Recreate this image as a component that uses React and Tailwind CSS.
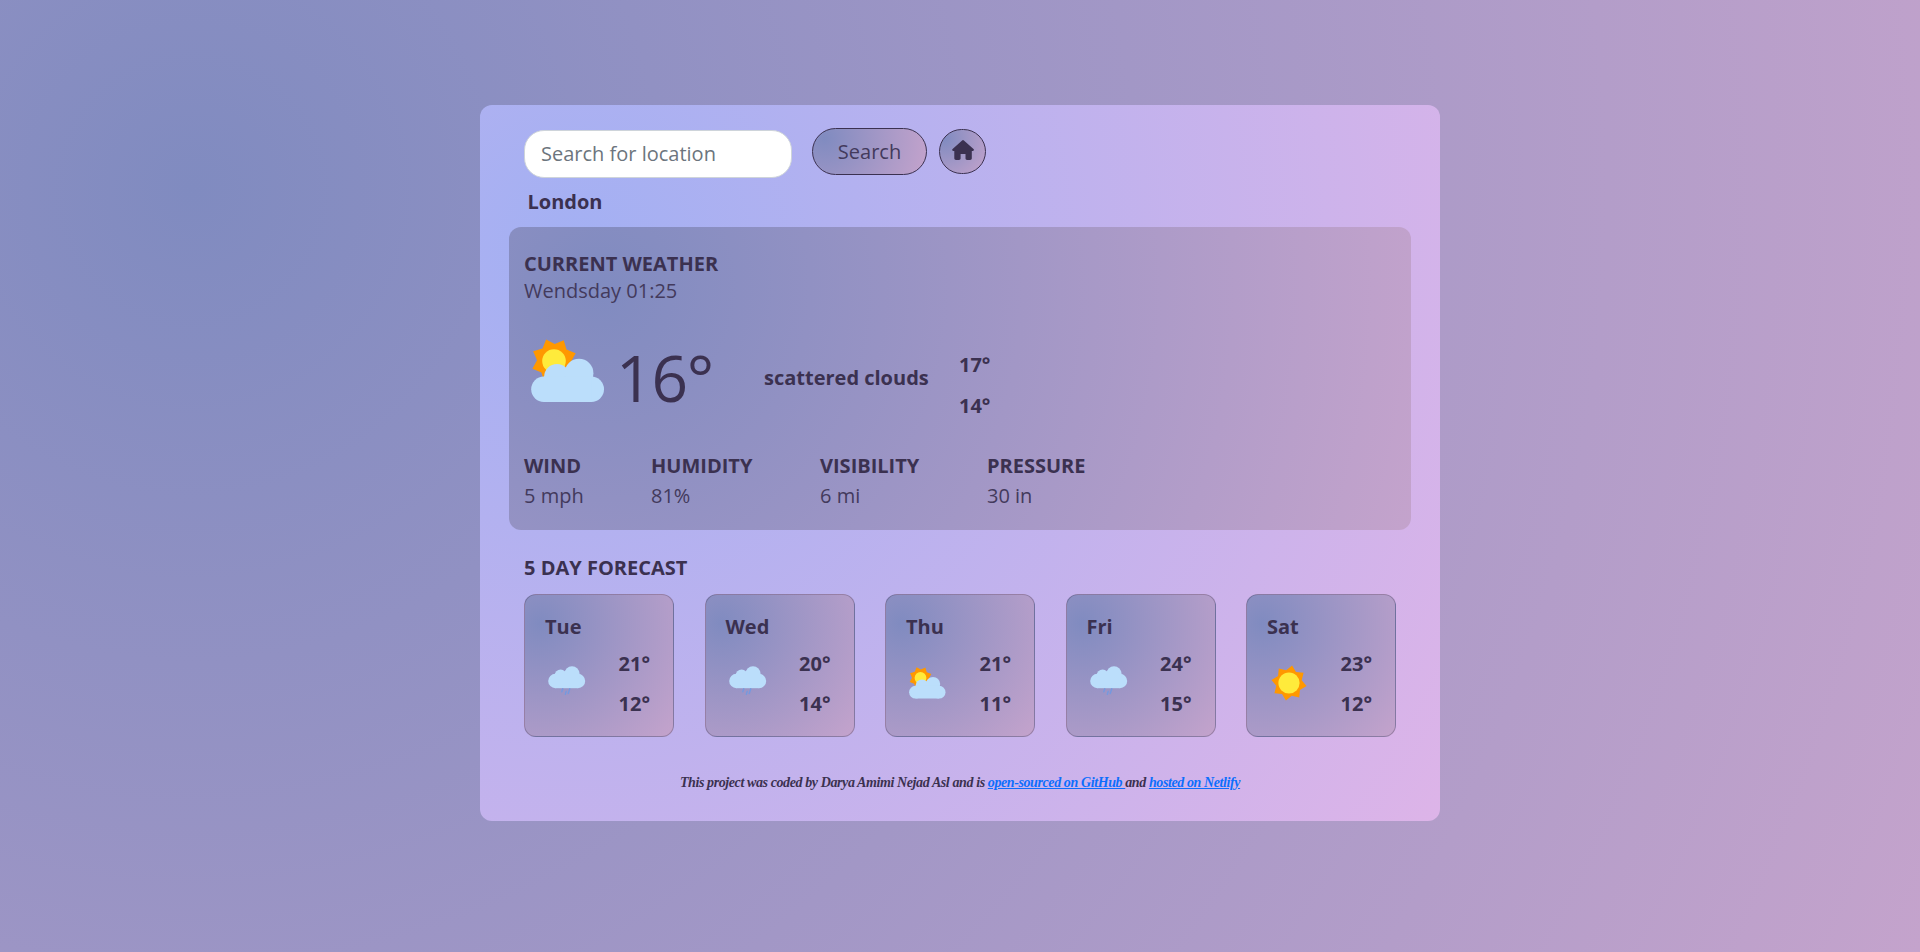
const DUSK = "bg-[radial-gradient(circle_farthest-corner_at_10%_20%,rgb(128,139,192)_0%,rgb(196,163,204)_100%)]";
const DAWN = "bg-[radial-gradient(circle_farthest-corner_at_10%_20%,rgb(163,176,243)_0%,rgb(221,180,232)_100%)]";

function sunPoints(cx, cy, outer, inner, degrees) {
  const turn = (degrees * Math.PI) / 180;
  return Array.from({ length: 16 }, (_, i) => {
    const r = i % 2 ? inner : outer;
    const a = turn + (i * Math.PI) / 8;
    return `${(cx + r * Math.cos(a)).toFixed(2)},${(cy + r * Math.sin(a)).toFixed(2)}`;
  }).join(" ");
}

function PartlyCloudy({ className }) {
  return (
    <svg viewBox="0 0 74 64" className={className}>
      <polygon points={sunPoints(23, 22, 23, 17, -20)} fill="#ff9800" />
      <circle cx="23" cy="22" r="11.8" fill="#ffeb3b" />
      <g fill="#bbdefb">
        <circle cx="12.9" cy="50.3" r="12.7" />
        <circle cx="60.3" cy="50.3" r="12.7" />
        <circle cx="26" cy="37.8" r="12.9" />
        <circle cx="48" cy="34.2" r="14.4" />
        <rect x="12.9" y="37.6" width="47.4" height="25.4" />
      </g>
    </svg>
  );
}

function Sun({ className }) {
  return (
    <svg viewBox="0 0 36 36" className={className}>
      <polygon points={sunPoints(18, 18, 17.8, 13, 10)} fill="#ff9800" />
      <circle cx="18" cy="18" r="10.6" fill="#ffeb3b" />
    </svg>
  );
}

function Rain({ className }) {
  return (
    <svg viewBox="0 0 38 30" className={className}>
      <g fill="#bbdefb">
        <circle cx="7.4" cy="15" r="7.2" />
        <circle cx="30" cy="15" r="7.2" />
        <circle cx="12.6" cy="9.6" r="6" />
        <circle cx="24" cy="7.8" r="7.6" />
        <rect x="7.4" y="9" width="22.6" height="13.2" />
      </g>
      <g fill="none" stroke="#7399e0" strokeWidth="1.4" strokeLinecap="round">
        <path d="M14.8 22.8l-1 3M18.2 25.4l-.9 3M21.8 22.8l-1.6 4.8" />
      </g>
    </svg>
  );
}

function Home({ className }) {
  return (
    <svg viewBox="0 0 22 20" fill="currentColor" className={className}>
      <path d="M10.1.5a1.4 1.4 0 0 1 1.8 0l9.6 8.4c.9.8.4 2-.7 2h-1v7.3c0 1-.7 1.7-1.7 1.7h-3c-1 0-1.6-.7-1.6-1.6v-4.4H8.6v4.4c0 .9-.6 1.6-1.6 1.6H4c-1 0-1.7-.7-1.7-1.7v-7.3h-1c-1.1 0-1.6-1.2-.7-2z" />
    </svg>
  );
}

const stats = [
  ["WIND", "5 mph", "w-[127px]"],
  ["HUMIDITY", "81%", "w-[169px]"],
  ["VISIBILITY", "6 mi", "w-[167px]"],
  ["PRESSURE", "30 in", "w-[110px]"],
];

const days = [
  ["Tue", "21°", "12°", "rain"],
  ["Wed", "20°", "14°", "rain"],
  ["Thu", "21°", "11°", "partly"],
  ["Fri", "24°", "15°", "rain"],
  ["Sat", "23°", "12°", "sun"],
];

function DayIcon({ kind }) {
  if (kind === "rain") return <Rain className="mt-4 w-[38px] h-[30px]" />;
  if (kind === "partly") return <PartlyCloudy className="mt-[17px] w-[37px] h-8" />;
  return <Sun className="ml-px mt-[15px] w-9 h-9" />;
}

export default function App() {
  return (
    <div className={`min-h-screen pt-[105px] font-['Open_Sans',sans-serif] text-[20px] text-[#3b3150] ${DUSK}`}>
      <main className={`mx-auto w-[960px] h-[716px] rounded-xl px-[29px] ${DAWN}`}>
        <form className="flex h-[86px] pl-[15px] pt-[23px]" onSubmit={(e) => e.preventDefault()}>
          <input
            placeholder="Search for location"
            className="mt-[2px] w-[268px] h-[48px] rounded-[20px] border border-[#ced4da] bg-white px-4 pb-[2px] placeholder:text-[#6c757d] outline-none"
          />
          <button className={`ml-5 w-[115px] h-[47px] rounded-[24px] border border-[#3b3150] text-[#433a5c] ${DUSK}`}>Search</button>
          <button aria-label="Home" className={`ml-3 mt-px flex w-[47px] h-[45px] items-center justify-center rounded-full border border-[#3b3150] pb-[4px] ${DUSK}`}>
            <Home className="w-[22px] h-5" />
          </button>
        </form>
        <h1 className="h-[36px] pl-[18.5px] leading-[22px] font-bold">London</h1>

        <section className={`h-[303px] rounded-xl px-[15px] pt-[23px] ${DUSK}`}>
          <h2 className="leading-7 font-bold">CURRENT WEATHER</h2>
          <p className="leading-[26px] text-[#433a5c]">Wendsday 01:25</p>
          <div className="flex h-[147px]">
            <PartlyCloudy className="ml-[7px] mt-[35px] w-[74px] h-16" />
            <div className="ml-[11px] mt-[30px] w-[148px] text-[64px] leading-[88px] tracking-[-1.2px]">16°</div>
            <div className="mt-[60px] w-[195px] leading-7 font-bold">scattered clouds</div>
            <div className="mt-[47px] flex flex-col gap-[13px] leading-7 font-bold">
              <span>17°</span>
              <span>14°</span>
            </div>
          </div>
          <div className="flex">
            {stats.map(([label, value, width]) => (
              <div key={label} className={`${width} leading-[30px]`}>
                <div className="font-bold">{label}</div>
                <div className="text-[#433a5c]">{value}</div>
              </div>
            ))}
          </div>
        </section>

        <h2 className="mt-[24px] h-10 pl-[15px] leading-7 font-bold">5 DAY FORECAST</h2>
        <div className="flex justify-between px-[15px]">
          {days.map(([day, hi, lo, kind]) => (
            <article key={day} className={`w-[150px] h-[143px] rounded-xl border border-[#3b3150]/30 pl-5 pr-[23px] pt-[18px] font-bold leading-7 ${DUSK}`}>
              <h3>{day}</h3>
              <div className="flex justify-between pl-[3px] pt-[9px]">
                <DayIcon kind={kind} />
                <div className="flex flex-col gap-3">
                  <span>{hi}</span>
                  <span>{lo}</span>
                </div>
              </div>
            </article>
          ))}
        </div>
        <footer className="mt-[32px] text-center font-['Liberation_Serif',cursive] text-[14px] leading-7 font-bold italic tracking-[-0.4px]">
          This project was coded by Darya Amimi Nejad Asl and is{" "}
          <a href="#github" className="text-[#0d6efd] underline">open-sourced on GitHub </a>
          and <a href="#netlify" className="text-[#0d6efd] underline">hosted on Netlify</a>
        </footer>
      </main>
    </div>
  );
}
